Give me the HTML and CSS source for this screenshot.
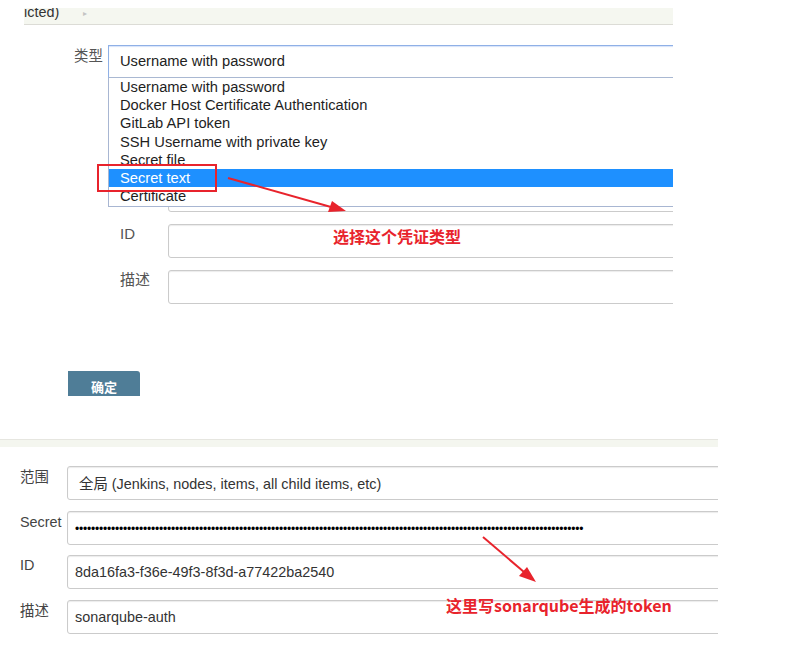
FILE: index.html
```html
<!DOCTYPE html>
<html lang="zh-CN">
<head>
  <meta charset="UTF-8" />
  <meta name="viewport" content="width=device-width, initial-scale=1" />
  <title>Jenkins 凭证 - Secret text</title>
  <link rel="stylesheet" href="styles.css">
</head>
<body>
<div class="page">

  <!-- first screenshot: choosing the credential kind -->
  <section class="shot-top">
    <div class="crumb">
      <span class="crumb-text">icted)</span>
      <span class="crumb-arrow">&#9656;</span>
    </div>

    <div class="kind-row">
      <label class="label">类型</label>
      <div class="field">
        <div class="select focused">Username with password</div>
        <ul class="dropdown">
          <li>Username with password</li>
          <li>Docker Host Certificate Authentication</li>
          <li>GitLab API token</li>
          <li>SSH Username with private key</li>
          <li>Secret file</li>
          <li class="selected">Secret text</li>
          <li>Certificate</li>
        </ul>
      </div>
    </div>

    <!-- rows under the open list are covered, only their boxes are drawn -->
    <div class="sub-form">
      <div class="row">
        <label class="label"></label>
        <div class="input"></div>
      </div>
      <div class="row">
        <label class="label"></label>
        <div class="input"></div>
      </div>
      <div class="row">
        <label class="label"></label>
        <div class="input"></div>
      </div>
      <div class="row">
        <label class="label">ID</label>
        <div class="input"></div>
      </div>
      <div class="row">
        <label class="label">描述</label>
        <div class="input"></div>
      </div>
    </div>

    <button class="btn">确定</button>
  </section>

  <div class="divider"></div>

  <!-- second screenshot: the filled secret text form -->
  <section class="shot-bottom">
    <div class="row">
      <label class="label">范围</label>
      <div class="input select-like">全局 (Jenkins, nodes, items, all child items, etc)</div>
    </div>
    <div class="row">
      <label class="label">Secret</label>
      <div class="input"><span class="dots">•••••••••••••••••••••••••••••••••••••••••••••••••••••••••••••••••••••••••••••••••••••••••••••••••••••••••••••••••••••••••••••••</span></div>
    </div>
    <div class="row">
      <label class="label">ID</label>
      <div class="input">8da16fa3-f36e-49f3-8f3d-a77422ba2540</div>
    </div>
    <div class="row">
      <label class="label">描述</label>
      <div class="input">sonarqube-auth</div>
    </div>
  </section>

  <!-- annotations drawn over the screenshots -->
  <div class="mark-box"></div>
  <div class="note note-one">选择这个凭证类型</div>
  <div class="note note-two">这里写sonarqube生成的token</div>
  <svg class="arrows" width="798" height="654" viewBox="0 0 798 654">
    <line x1="228" y1="178" x2="331" y2="207" stroke="#e8232c" stroke-width="2" />
    <polygon points="346,211 328,212 332,201" fill="#e8232c" />
    <line x1="483" y1="537" x2="524" y2="572" stroke="#e8232c" stroke-width="2" />
    <polygon points="536,582 519,576 527,567" fill="#e8232c" />
  </svg>
</div>
</body>
</html>
```

FILE: styles.css
```css
body {
  margin: 0;
  background: #fff;
  font-family: "Liberation Sans", "Noto Sans CJK SC", sans-serif;
  font-size: 14.4px;
  color: #222;
}
.page {
  position: relative;
  width: 798px;
  height: 654px;
  overflow: hidden;
}

/* top screenshot */
.shot-top {
  width: 673px;
  height: 396px;
  overflow: hidden;
}
.crumb {
  margin: 8px 0 0 24px;
  height: 16px;
  background: #f5f7f0;
  border-bottom: 1px solid #dcdcd6;
  overflow: hidden;
  display: flex;
  align-items: flex-start;
}
.crumb-text {
  width: 34px;
  margin-top: -5px;
  line-height: 18px;
  color: #333;
}
.crumb-arrow {
  margin-left: 25px;
  font-size: 8px;
  line-height: 12px;
  color: #c4c4c4;
}
.kind-row {
  display: flex;
  margin-top: 20px;
  padding-left: 74px;
}
.label {
  flex: none;
  line-height: 20px;
  color: #555;
}
.kind-row .label {
  width: 34px;
  padding-top: 1px;
}
.field {
  position: relative;
  flex: none;
  width: 600px;
  font-size: 14.7px;
}
.select {
  box-sizing: border-box;
  height: 33px;
  padding-left: 11px;
  line-height: 31px;
  border: 1px solid #8fb0e6;
  border-bottom-color: #a9b8d2;
  box-shadow: inset 0 1px 1px rgba(90, 140, 230, 0.25);
  color: #222;
}
.dropdown {
  position: absolute;
  top: 100%;
  left: 0;
  right: 0;
  margin: 0;
  padding: 0 0 1px;
  list-style: none;
  background: #fff;
  border: 1px solid #a8b6d2;
  border-top: none;
  z-index: 2;
}
.dropdown li {
  height: 18.2px;
  line-height: 18.2px;
  padding-left: 11px;
  color: #1e1e1e;
  white-space: nowrap;
}
.dropdown li.selected {
  background: #1e90ff;
  color: #fff;
}

.sub-form {
  display: flex;
  flex-direction: column;
  gap: 12px;
  margin-top: 8px;
}
.row {
  display: flex;
}
.sub-form .row {
  padding-left: 120px;
}
.sub-form .label {
  width: 48px;
  font-size: 15px;
}
.input {
  flex: none;
  box-sizing: border-box;
  width: 700px;
  height: 34px;
  border: 1px solid #cbcbcb;
  border-radius: 3px;
  box-shadow: inset 0 1px 1px rgba(0, 0, 0, 0.08);
  background: #fff;
  padding-left: 7px;
  line-height: 32px;
  color: #333;
  white-space: nowrap;
  overflow: hidden;
}
.btn {
  display: block;
  margin: 67px 0 0 68px;
  width: 72px;
  height: 25px;
  padding: 7px 0 0;
  border: none;
  border-radius: 0 3px 0 0;
  background: #4f7d97;
  color: #fff;
  font-family: "Noto Sans CJK SC", sans-serif;
  font-weight: 700;
  font-size: 13px;
  line-height: 18px;
}

.divider {
  margin-top: 43px;
  width: 718px;
  height: 7px;
  background: #f4f6ef;
  border-top: 1px solid #e6e6e0;
}

/* bottom screenshot */
.shot-bottom {
  width: 718px;
  overflow: hidden;
  margin-top: 19px;
  display: flex;
  flex-direction: column;
  gap: 10.5px;
}
.shot-bottom .row {
  padding-left: 20px;
}
.shot-bottom .label {
  width: 47px;
  padding-top: 1px;
  color: #444;
}
.shot-bottom .row:nth-child(3) .label {
  padding-top: 0;
}
.select-like {
  padding-left: 11px;
  line-height: 34px;
}
.dots {
  font-size: 12px;
  letter-spacing: -0.2px;
  color: #000;
  line-height: 28px;
}

/* annotations */
.mark-box {
  position: absolute;
  left: 97px;
  top: 164px;
  width: 120px;
  height: 28px;
  box-sizing: border-box;
  border: 2px solid #e8232c;
  z-index: 3;
}
.note {
  position: absolute;
  font-family: "Noto Sans CJK SC", sans-serif;
  font-weight: 700;
  font-size: 16px;
  line-height: 20px;
  color: #e8232c;
  white-space: nowrap;
  z-index: 3;
}
.note-one {
  left: 333px;
  top: 226px;
}
.note-two {
  left: 446px;
  top: 595px;
}
.arrows {
  position: absolute;
  left: 0;
  top: 0;
  pointer-events: none;
  z-index: 3;
}
```
